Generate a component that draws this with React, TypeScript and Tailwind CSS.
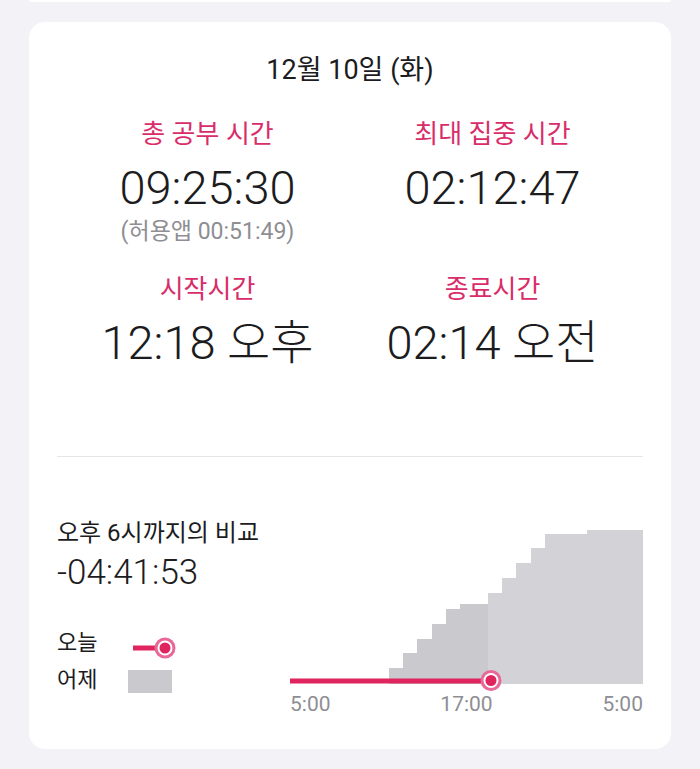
import React from "react";

const font = "font-['Roboto','Noto_Sans_CJK_KR',sans-serif]";

const Stat = ({ label, value, sub }: { label: string; value: string; sub?: string }) => (
  <div className="flex flex-col items-center">
    <span className="text-[26px] leading-[32px] text-[#d92d6a]">{label}</span>
    <span className="mt-[12px] text-[47px] font-light leading-[52px] text-[#1c1c1e]">{value}</span>
    {sub && <span className="mt-[4px] text-[23px] leading-[28px] text-[#8e8e93]">{sub}</span>}
  </div>
);

const Ring = ({ cx, cy }: { cx: number; cy: number }) => (
  <>
    <circle cx={cx} cy={cy} r={10.5} fill="#e8689a" />
    <circle cx={cx} cy={cy} r={7.5} fill="#ffffff" />
    <circle cx={cx} cy={cy} r={5.5} fill="#e0245e" />
  </>
);

const Chart = () => (
  <div className="flex w-[353px] flex-col">
    <svg width="353" height="170" viewBox="0 0 353 170">
      <path
        d="M99 163V147H113V132H127V118H142V103H156V88H170V83H198V163Z"
        fill="#c9c9ce"
      />
      <path
        d="M198 163V72H212V57H226V42H241V27H255V13H297V9H353V163Z"
        fill="#d2d2d7"
      />
      <line x1="0" y1="160" x2="200" y2="160" stroke="#e0245e" strokeWidth="5" />
      <Ring cx={201} cy={159.5} />
    </svg>
    <div className="mt-[1px] flex justify-between text-[21px] leading-[24px] text-[#8e8e93]">
      <span>5:00</span>
      <span>17:00</span>
      <span>5:00</span>
    </div>
  </div>
);

export default function App() {
  return (
    <div className={`min-h-[769px] bg-[#f2f2f7] px-[29px] ${font}`}>
      <div className="h-[2px] rounded-b-[2px] bg-white" />
      <div className="mt-[20px] rounded-[16px] bg-white px-[28px] pb-[33px] pt-[32px]">
        <div className="text-center text-[27px] leading-[32px] text-[#1c1c1e]">12월 10일 (화)</div>

        <div className="mt-[32px] grid grid-cols-2 px-[8px]">
          <Stat label="총 공부 시간" value="09:25:30" sub="(허용앱 00:51:49)" />
          <Stat label="최대 집중 시간" value="02:12:47" />
        </div>
        <div className="mt-[27px] grid grid-cols-2 px-[8px]">
          <Stat label="시작시간" value="12:18 오후" />
          <Stat label="종료시간" value="02:14 오전" />
        </div>

        <div className="mt-[87px] h-px bg-[#e5e5ea]" />

        <div className="mt-[62px] flex justify-between">
          <div className="flex flex-col">
            <span className="text-[24px] leading-[28px] text-[#1c1c1e]">오후 6시까지의 비교</span>
            <span className="mt-[6px] text-[35px] font-light leading-[40px] text-[#1c1c1e]">-04:41:53</span>
            <div className="mt-[35px] flex items-start">
              <span className="w-[71px] text-[22px] leading-[30px] text-[#1c1c1e]">오늘</span>
              <svg width="50" height="26" viewBox="0 0 50 26" className="mt-[7px]">
                <line x1="5" y1="13" x2="30" y2="13" stroke="#e0245e" strokeWidth="5" />
                <Ring cx={37} cy={13} />
              </svg>
            </div>
            <div className="mt-[4px] flex items-start">
              <span className="w-[71px] text-[22px] leading-[30px] text-[#1c1c1e]">어제</span>
              <div className="mt-[5px] h-[23px] w-[44px] bg-[#c9c9ce]" />
            </div>
          </div>
          <div className="mt-[2px]">
            <Chart />
          </div>
        </div>
      </div>
    </div>
  );
}
